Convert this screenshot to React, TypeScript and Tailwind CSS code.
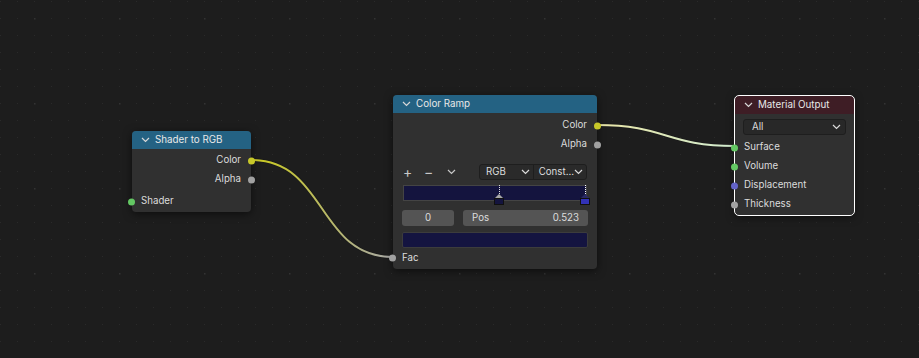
import { ReactNode } from "react";

const FONT = { fontFamily: "Inter, 'Noto Sans', sans-serif" };

const SOCKET = {
  color: "bg-[#c7c729]",
  float: "bg-[#a1a1a1]",
  shader: "bg-[#63c763]",
  vector: "bg-[#6363c7]",
};

const Chevron = ({ className = "" }: { className?: string }) => (
  <svg width="9" height="6" viewBox="0 0 9 6" className={className}>
    <path d="M1 1 L4.5 4.5 L8 1" fill="none" stroke="currentColor" strokeWidth="1.2" />
  </svg>
);

const Socket = ({ kind, side }: { kind: keyof typeof SOCKET; side: "left" | "right" }) => (
  <span
    className={`absolute top-1/2 -translate-y-1/2 w-[7px] h-[7px] rounded-full ${SOCKET[kind]} ${
      side === "left" ? "-left-[4px]" : "-right-[4px]"
    }`}
  />
);

const Row = ({
  label,
  kind,
  side,
  className = "",
}: {
  label: string;
  kind: keyof typeof SOCKET;
  side: "left" | "right";
  className?: string;
}) => (
  <div
    className={`relative flex items-center h-[19px] text-[9.7px] text-[#dcdcdc] ${
      side === "right" ? "justify-end pr-[10px]" : "pl-[9px]"
    } ${className}`}
  >
    {label}
    <Socket kind={kind} side={side} />
  </div>
);

type NodeProps = {
  title: string;
  x: number;
  y: number;
  w: number;
  h: number;
  header: string;
  selected?: boolean;
  children: ReactNode;
};

const Node = ({ title, x, y, w, h, header, selected, children }: NodeProps) => (
  <div
    className={`absolute rounded-[4px] bg-[#303030] shadow-[0_2px_8px_rgba(0,0,0,0.55)] ${
      selected ? "outline outline-1 outline-white" : ""
    }`}
    style={{ left: x, top: y, width: w, height: h }}
  >
    <div
      className={`flex items-center gap-[5px] h-[18px] pl-[9px] rounded-t-[4px] text-[9.8px] text-[#e8e8e8] ${header}`}
    >
      <Chevron className="text-[#d8d8d8]" />
      <span>{title}</span>
    </div>
    {children}
  </div>
);

const Grid = () => (
  <svg className="absolute inset-0" width="919" height="358">
    <defs>
      <pattern id="small" x="0" y="1" width="17" height="17" patternUnits="userSpaceOnUse">
        <rect x="0" y="0" width="1" height="1" fill="#2a2a2a" />
      </pattern>
      <pattern id="big" x="34" y="18" width="85" height="85" patternUnits="userSpaceOnUse">
        <rect x="-0.5" y="-0.5" width="2" height="2" fill="#333333" />
      </pattern>
    </defs>
    <rect width="919" height="358" fill="url(#small)" />
    <rect width="919" height="358" fill="url(#big)" />
  </svg>
);

const Links = () => (
  <svg className="absolute inset-0" width="919" height="358">
    <defs>
      <linearGradient id="l1" gradientUnits="userSpaceOnUse" x1="251" y1="0" x2="393" y2="0">
        <stop offset="0.1" stopColor="#c7c729" />
        <stop offset="1" stopColor="#a8a8a8" />
      </linearGradient>
      <linearGradient id="l2" gradientUnits="userSpaceOnUse" x1="597" y1="0" x2="735" y2="0">
        <stop offset="0" stopColor="#e8e4a6" />
        <stop offset="1" stopColor="#d2ecd0" />
      </linearGradient>
    </defs>
    <path d="M251 160 C 327 160, 317 257, 393 257" fill="none" stroke="#1a1a1a" strokeWidth="3.5" />
    <path d="M251 160 C 327 160, 317 257, 393 257" fill="none" stroke="url(#l1)" strokeWidth="2" />
    <path d="M597 125 C 666 125, 666 146, 735 146" fill="none" stroke="#1a1a1a" strokeWidth="3.5" />
    <path d="M597 125 C 666 125, 666 146, 735 146" fill="none" stroke="url(#l2)" strokeWidth="2" />
  </svg>
);

const RampHandle = ({ left, active }: { left: number; active?: boolean }) => (
  <div className="absolute top-0 flex flex-col items-center w-[10px]" style={{ left: left - 5 }}>
    <div className={`h-[9px] border-l border-dotted ${active ? "border-white" : "border-[#dddddd]"}`} />
    <div
      className={`w-0 h-0 border-l-[4px] border-r-[4px] border-b-[4px] border-l-transparent border-r-transparent ${
        active ? "border-b-[#2a2a66]" : "border-b-[#a8a8a8]"
      }`}
    />
    <div
      className={`w-[10px] h-[7px] border border-[#101010] ${active ? "bg-[#3232b8]" : "bg-[#14143e]"}`}
    />
  </div>
);

const ColorRampBody = () => (
  <div className="flex flex-col">
    <div className="h-[3px]" />
    <Row label="Color" kind="color" side="right" className="h-[18px]" />
    <Row label="Alpha" kind="float" side="right" className="h-[18px]" />
    <div className="flex items-center h-[16px] mt-[10px] pl-[10px] pr-[10px] text-[#c8c8c8]">
      <span className="w-[21px] text-[14px] leading-none">+</span>
      <span className="w-[22px] text-[14px] leading-none">−</span>
      <Chevron className="ml-[1px] text-[#c8c8c8]" />
      <div className="ml-auto flex h-[16px] w-[108px] rounded-[3px] border border-[#1e1e1e] bg-[#2a2a2a] text-[9.7px] text-[#dcdcdc]">
        <div className="flex items-center justify-between w-[54px] pl-[6px] pr-[3px] border-r border-[#1e1e1e]">
          <span>RGB</span>
          <Chevron />
        </div>
        <div className="flex items-center justify-between flex-1 pl-[5px] pr-[3px]">
          <span>Const...</span>
          <Chevron />
        </div>
      </div>
    </div>
    <div className="relative mx-[10px] mt-[5px] h-[20px]">
      <div className="h-[16px] bg-[#14143e] border border-[#444]" />
      <RampHandle left={96} />
      <RampHandle left={182} active />
    </div>
    <div className="flex gap-[9px] mx-[9px] mt-[5px] h-[16px] text-[9.7px] text-[#dcdcdc]">
      <div className="flex items-center justify-center w-[52px] rounded-[3px] bg-[#545454]">0</div>
      <div className="flex items-center justify-between flex-1 rounded-[3px] bg-[#545454] px-[9px]">
        <span>Pos</span>
        <span>0.523</span>
      </div>
    </div>
    <div className="mx-[9px] mt-[6px] h-[16px] rounded-[2px] bg-[#141440] border border-[#3c3c3c]" />
    <Row label="Fac" kind="float" side="left" className="h-[20px]" />
  </div>
);

export default function App() {
  return (
    <div className="relative w-[919px] h-[358px] overflow-hidden bg-[#1d1d1d]" style={FONT}>
      <Grid />
      <Links />

      <Node title="Shader to RGB" x={132} y={131} w={119} h={81} header="bg-[#246283]">
        <div className="flex flex-col pt-[2px]">
          <Row label="Color" kind="color" side="right" />
          <Row label="Alpha" kind="float" side="right" />
          <Row label="Shader" kind="shader" side="left" className="mt-[3px]" />
        </div>
      </Node>

      <Node title="Color Ramp" x={393} y={95} w={204} h={174} header="bg-[#246283]">
        <ColorRampBody />
      </Node>

      <Node title="Material Output" x={735} y={96} w={119} h={119} header="bg-[#3e1d25]" selected>
        <div className="flex flex-col">
          <div className="flex items-center justify-between mx-[8px] mt-[5px] h-[16px] rounded-[3px] border border-[#1e1e1e] bg-[#282828] pl-[8px] pr-[4px] text-[9.7px] text-[#dcdcdc]">
            <span>All</span>
            <Chevron />
          </div>
          <div className="h-[3px]" />
          <Row label="Surface" kind="shader" side="left" />
          <Row label="Volume" kind="shader" side="left" />
          <Row label="Displacement" kind="vector" side="left" />
          <Row label="Thickness" kind="float" side="left" />
        </div>
      </Node>
    </div>
  );
}
